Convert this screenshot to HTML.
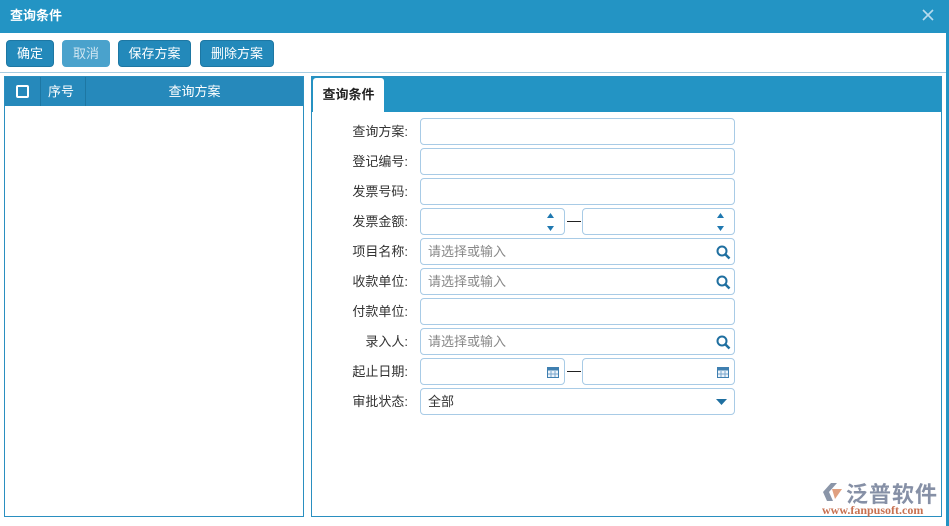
<!DOCTYPE html>
<html><head><meta charset="utf-8"><style>
*{box-sizing:border-box;margin:0;padding:0}
body{width:949px;height:526px;background:#fff;font-family:"Liberation Sans","Noto Sans CJK SC",sans-serif;font-size:13px;color:#333;position:relative;overflow:hidden}
.abs{position:absolute}
.title{left:0;top:0;width:949px;height:33px;background:#2394c4;color:#fff;font-weight:bold;font-size:13px;line-height:32px;padding-left:10px}
.rb{left:946px;top:0;width:3px;height:526px;background:#2394c4}
.btn{top:40px;height:27px;background:#2389ba;border:1px solid #1d77a3;border-radius:4px;color:#fff;text-align:center;line-height:25px;font-size:13px}
.panel{border:1px solid #2a8fc0}
.inp{position:absolute;left:420px;width:315px;height:27px;border:1px solid #a8cbe6;border-radius:4px;background:#fff;color:#888;padding-left:7px;line-height:25px}
.lbl{position:absolute;left:320px;width:88px;text-align:right;line-height:27px;color:#333}
.sp{position:absolute;right:10px;top:3px;width:7px}
</style></head><body>
<div class="abs title">查询条件</div>
<svg class="abs" style="left:922px;top:9px" width="12" height="12"><path d="M1 1l10 10M11 1L1 11" stroke="#b8dcee" stroke-width="1.6"/></svg>
<div class="abs rb"></div>
<div class="abs" style="left:0;top:72px;width:946px;height:1px;background:#a8cde2"></div>
<div class="abs btn" style="left:6px;width:48px">确定</div>
<div class="abs btn" style="left:62px;width:48px;background:#4aa2cc;border-color:#4aa2cc;color:#cfe6f2">取消</div>
<div class="abs btn" style="left:118px;width:73px">保存方案</div>
<div class="abs btn" style="left:200px;width:74px">删除方案</div>

<div class="abs panel" style="left:4px;top:76px;width:300px;height:441px"></div>
<div class="abs" style="left:5px;top:77px;width:298px;height:29px;background:#2689bb;color:#fff;line-height:29px">
 <div class="abs" style="left:11px;top:8px;width:13px;height:13px;border:2px solid #fff;border-radius:2px"></div>
 <div class="abs" style="left:35px;top:0;width:1px;height:29px;background:#1d77a3"></div>
 <div class="abs" style="left:43px">序号</div>
 <div class="abs" style="left:80px;top:0;width:1px;height:29px;background:#1d77a3"></div>
 <div class="abs" style="left:81px;width:217px;text-align:center">查询方案</div>
</div>

<div class="abs panel" style="left:311px;top:76px;width:631px;height:441px"></div>
<div class="abs" style="left:312px;top:77px;width:629px;height:35px;background:#2394c4"></div>
<div class="abs" style="left:313px;top:78px;width:71px;height:35px;background:#fff;border-radius:3px 3px 0 0;font-weight:bold;line-height:34px;text-align:center;color:#222">查询条件</div>

<div class="lbl" style="top:118px">查询方案:</div><div class="inp" style="top:118px"></div>
<div class="lbl" style="top:148px">登记编号:</div><div class="inp" style="top:148px"></div>
<div class="lbl" style="top:178px">发票号码:</div><div class="inp" style="top:178px"></div>
<div class="lbl" style="top:208px">发票金额:</div>
<div class="inp" style="top:208px;width:145px"><svg class="sp" width="7" height="20"><path d="M0 6L3.5 1 7 6zM0 14l3.5 5 3.5-5z" fill="#1f78b0"/></svg></div>
<div class="abs" style="left:567px;top:221px;width:14px;height:1px;background:#222"></div>
<div class="inp" style="top:208px;left:582px;width:153px"><svg class="sp" width="7" height="20"><path d="M0 6L3.5 1 7 6zM0 14l3.5 5 3.5-5z" fill="#1f78b0"/></svg></div>
<div class="lbl" style="top:238px">项目名称:</div><div class="inp" style="top:238px">请选择或输入<svg class="abs" style="right:3px;top:6px" width="15" height="15"><circle cx="6" cy="6" r="4.5" fill="none" stroke="#1f6fa0" stroke-width="2"/><path d="M9.5 9.5l4 4" stroke="#1f6fa0" stroke-width="2.5"/></svg></div>
<div class="lbl" style="top:268px">收款单位:</div><div class="inp" style="top:268px">请选择或输入<svg class="abs" style="right:3px;top:6px" width="15" height="15"><circle cx="6" cy="6" r="4.5" fill="none" stroke="#1f6fa0" stroke-width="2"/><path d="M9.5 9.5l4 4" stroke="#1f6fa0" stroke-width="2.5"/></svg></div>
<div class="lbl" style="top:298px">付款单位:</div><div class="inp" style="top:298px"></div>
<div class="lbl" style="top:328px">录入人:</div><div class="inp" style="top:328px">请选择或输入<svg class="abs" style="right:3px;top:6px" width="15" height="15"><circle cx="6" cy="6" r="4.5" fill="none" stroke="#1f6fa0" stroke-width="2"/><path d="M9.5 9.5l4 4" stroke="#1f6fa0" stroke-width="2.5"/></svg></div>
<div class="lbl" style="top:358px">起止日期:</div>
<div class="inp" style="top:358px;width:145px"><svg class="abs" style="right:5px;top:7px" width="12" height="12"><rect x="0.5" y="1.5" width="11" height="10" fill="#eef4fa" stroke="#3f7fb0"/><rect x="0.5" y="1.5" width="11" height="3" fill="#3f7fb0"/><path d="M4 5v6M8 5v6M1 8h10" stroke="#7aa6cc"/></svg></div>
<div class="abs" style="left:567px;top:371px;width:14px;height:1px;background:#222"></div>
<div class="inp" style="top:358px;left:582px;width:153px"><svg class="abs" style="right:5px;top:7px" width="12" height="12"><rect x="0.5" y="1.5" width="11" height="10" fill="#eef4fa" stroke="#3f7fb0"/><rect x="0.5" y="1.5" width="11" height="3" fill="#3f7fb0"/><path d="M4 5v6M8 5v6M1 8h10" stroke="#7aa6cc"/></svg></div>
<div class="lbl" style="top:388px">审批状态:</div><div class="inp" style="top:388px;color:#333">全部<svg class="abs" style="right:7px;top:10px" width="11" height="7"><path d="M0 0h11L5.5 6z" fill="#1f6fa0"/></svg></div>

<div class="abs" style="left:820px;top:481px;width:24px;height:22px"><svg width="24" height="22"><path d="M3 11L11 2h6L9 11l4 9H7z" fill="#8a95a8"/><path d="M12 8h10l-7 10z" fill="#e0a080"/></svg></div>
<div class="abs" style="left:846px;top:477px;font-size:22px;font-weight:bold;color:#8690a6;letter-spacing:1px">泛普软件</div>
<div class="abs" style="left:822px;top:503px;font-size:12px;color:#c87050;font-family:'Liberation Serif',serif;font-weight:bold">www.fanpusoft.com</div>
</body></html>
